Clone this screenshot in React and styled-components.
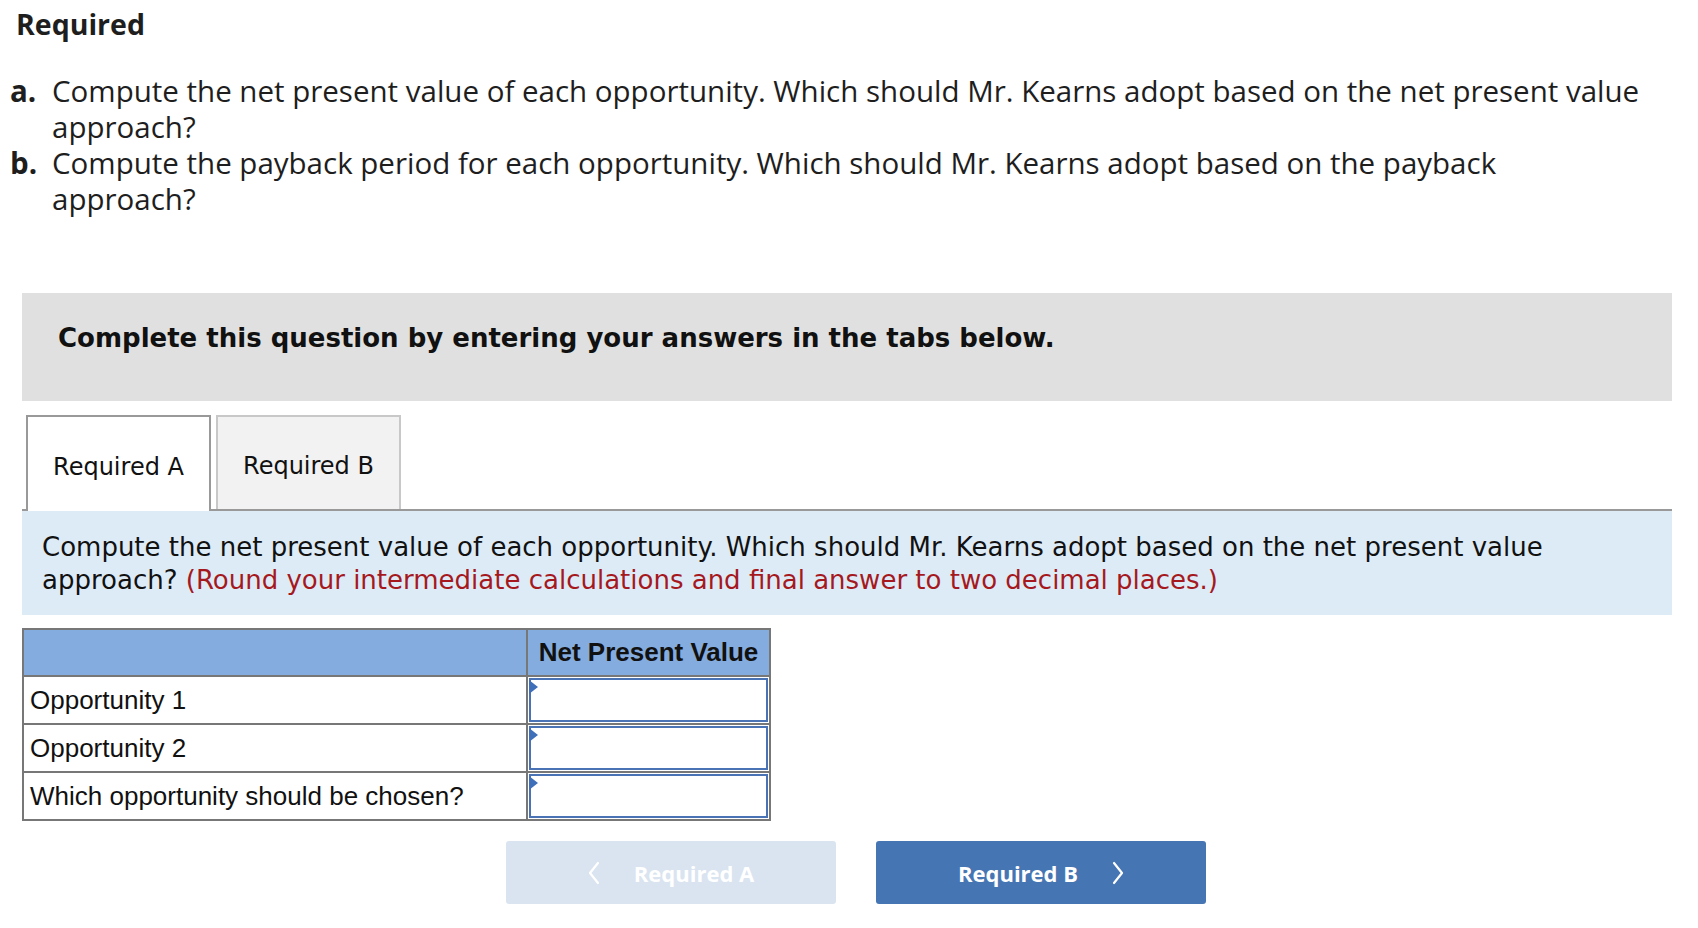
import React from 'react'
import styled, { createGlobalStyle } from 'styled-components'

const GlobalStyle = createGlobalStyle`
  body {
    margin: 0;
    background: #fff;
    color: #1a1a1a;
  }
`

const rows = ['Opportunity 1', 'Opportunity 2', 'Which opportunity should be chosen?']

const Chevron = ({ dir }) => (
  <svg width="12" height="24" viewBox="0 0 12 24" fill="none">
    <polyline
      points={dir === 'left' ? '10,2 2,12 10,22' : '2,2 10,12 2,22'}
      stroke="currentColor"
      strokeWidth="2.2"
      strokeLinecap="round"
      strokeLinejoin="round"
    />
  </svg>
)

const App = () => (
  <Page>
    <GlobalStyle />
    <Heading>Required</Heading>
    <List>
      <Item>
        <Marker>a.</Marker>
        <ItemText>
          Compute the net present value of each opportunity. Which should Mr. Kearns adopt based on the net
          present value approach?
        </ItemText>
      </Item>
      <Item>
        <Marker>b.</Marker>
        <ItemText>
          Compute the payback period for each opportunity. Which should Mr. Kearns adopt based on the payback
          approach?
        </ItemText>
      </Item>
    </List>

    <Section>
      <Banner>Complete this question by entering your answers in the tabs below.</Banner>
      <Tabs>
        <Tab active>Required A</Tab>
        <Tab>Required B</Tab>
      </Tabs>
      <Instructions>
        Compute the net present value of each opportunity. Which should Mr. Kearns adopt based on the net present
        value approach? <Hint>(Round your intermediate calculations and final answer to two decimal places.)</Hint>
      </Instructions>

      <Table>
        <thead>
          <tr>
            <HeadCell wide />
            <HeadCell>Net Present Value</HeadCell>
          </tr>
        </thead>
        <tbody>
          {rows.map(label => (
            <tr key={label}>
              <LabelCell>{label}</LabelCell>
              <InputCell>
                <Field />
                <Flag />
              </InputCell>
            </tr>
          ))}
        </tbody>
      </Table>

      <Nav>
        <NavButton disabled>
          <Chevron dir="left" />
          <span>Required A</span>
        </NavButton>
        <NavButton primary>
          <span>Required B</span>
          <Chevron dir="right" />
        </NavButton>
      </Nav>
    </Section>
  </Page>
)

const Page = styled.div`
  width: 1698px;
  height: 928px;
  overflow: hidden;
  font-family: 'Open Sans', Lato, sans-serif;
`

const Heading = styled.h2`
  margin: 0;
  padding: 6px 0 0 16px;
  font-size: 28.5px;
  line-height: 36px;
  font-weight: 700;
  color: #1e1e1e;
`

const List = styled.div`
  margin-top: 31px;
  display: flex;
  flex-direction: column;
`

const Item = styled.div`
  display: flex;
  font-size: 29.5px;
  line-height: 36px;
  color: #1e1e1e;
`

const Marker = styled.span`
  width: 52px;
  flex: none;
  padding-left: 10px;
  box-sizing: border-box;
  font-weight: 700;
`

const ItemText = styled.span`
  max-width: 1590px;
`

const Section = styled.div`
  margin: 76px 0 0 22px;
  width: 1650px;
  font-family: 'DejaVu Sans', Verdana, sans-serif;
`

const Banner = styled.div`
  background: #e0e0e0;
  height: 108px;
  display: flex;
  align-items: center;
  padding: 0 0 18px 36px;
  box-sizing: border-box;
  font-size: 26px;
  font-weight: 700;
  color: #111;
`

const Tabs = styled.div`
  display: flex;
  gap: 5px;
  margin-top: 14px;
  padding-left: 4px;
  border-bottom: 2px solid #999;
  height: 96px;
  box-sizing: border-box;
`

const Tab = styled.div`
  width: 185px;
  box-sizing: border-box;
  display: flex;
  align-items: center;
  justify-content: center;
  font-size: 24px;
  color: #111;
  background: ${p => (p.active ? '#fff' : '#f2f2f2')};
  border: 2px solid ${p => (p.active ? '#999' : '#c8c8c8')};
  border-bottom: none;
  margin-bottom: ${p => (p.active ? '-2px' : '0')};
  padding-top: 5px;
`

const Instructions = styled.div`
  background: #ddebf7;
  padding: 20px 20px 19px 20px;
  font-size: 26px;
  line-height: 32.5px;
  color: #111;
`

const Hint = styled.span`
  color: #a5191e;
`

const Table = styled.table`
  margin-top: 13px;
  border-collapse: collapse;
  table-layout: fixed;
  width: 747px;
  font-family: 'Liberation Sans', Arial, sans-serif;
  font-size: 26px;
  color: #111;
  border: 2px solid #777;
`

const HeadCell = styled.th`
  background: #84acdf;
  height: 47px;
  padding: 0 8px;
  border: 2px solid #777;
  text-align: center;
  font-weight: 700;
  width: ${p => (p.wide ? '504px' : '243px')};
  box-sizing: border-box;
`

const LabelCell = styled.td`
  height: 46px;
  padding: 0 6px;
  border: 2px solid #777;
  text-align: left;
`

const InputCell = styled.td`
  position: relative;
  padding: 0;
  border: 2px solid #777;
`

const Field = styled.div`
  height: 40px;
  margin: 1px;
  border: 2px solid #4a73b5;
  background: #fff;
`

const Flag = styled.span`
  position: absolute;
  left: 1px;
  top: 3px;
  width: 0;
  height: 0;
  border-top: 7px solid transparent;
  border-bottom: 7px solid transparent;
  border-left: 9px solid #3f6fb8;
`

const Nav = styled.div`
  display: flex;
  gap: 40px;
  margin-top: 20px;
  padding-left: 484px;
`

const NavButton = styled.div`
  width: 330px;
  height: 63px;
  border-radius: 3px;
  display: flex;
  align-items: center;
  justify-content: center;
  gap: 34px;
  font-family: 'Open Sans', Lato, sans-serif;
  font-size: 22px;
  font-weight: 700;
  color: #fff;
  background: ${p => (p.primary ? '#4675b3' : '#dae4f0')};
`

export default App
